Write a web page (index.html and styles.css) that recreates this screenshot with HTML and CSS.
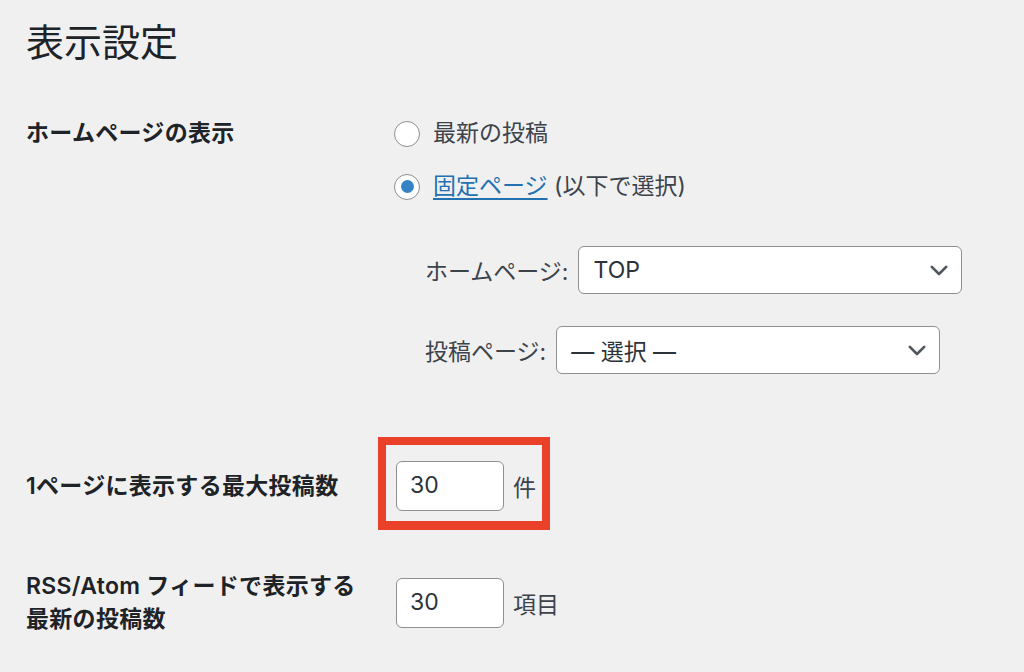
FILE: index.html
```html
<!DOCTYPE html>
<html lang="ja">
<head>
<meta charset="utf-8">
<title>表示設定</title>
<link rel="stylesheet" href="styles.css">
</head>
<body>
<main class="wrap">
  <h1 class="title">表示設定</h1>
  <div class="form">
    <div class="row row-front">
      <div class="th">ホームページの表示</div>
      <div class="td">
        <div class="radio-line"><span class="radio"></span><span>最新の投稿</span></div>
        <div class="radio-line"><span class="radio checked"></span><span><a class="link" href="#">固定ページ</a> (以下で選択)</span></div>
        <ul class="pages">
          <li class="page-line">
            <span class="page-label">ホームページ:</span>
            <div class="select"><span class="select-value">TOP</span><svg class="chev" width="18" height="11" viewBox="0 0 18 11"><polyline points="1.8,1.8 9,9 16.2,1.8" fill="none" stroke="#50575e" stroke-width="2.6" stroke-linecap="round" stroke-linejoin="round"/></svg></div>
          </li>
          <li class="page-line">
            <span class="page-label">投稿ページ:</span>
            <div class="select"><span class="select-value">— 選択 —</span><svg class="chev" width="18" height="11" viewBox="0 0 18 11"><polyline points="1.8,1.8 9,9 16.2,1.8" fill="none" stroke="#50575e" stroke-width="2.6" stroke-linecap="round" stroke-linejoin="round"/></svg></div>
          </li>
        </ul>
      </div>
    </div>

    <div class="row row-posts">
      <div class="th">1ページに表示する最大投稿数</div>
      <div class="td">
        <div class="field highlight">
          <div class="num-input">30</div><span class="suffix">件</span>
          <span class="mark" aria-hidden="true"></span>
        </div>
      </div>
    </div>

    <div class="row row-rss">
      <div class="th two-line">RSS/Atom フィードで表示する<br>最新の投稿数</div>
      <div class="td">
        <div class="field">
          <div class="num-input">30</div><span class="suffix">項目</span>
        </div>
      </div>
    </div>
  </div>
</main>
</body>
</html>
```

FILE: styles.css
```css
html, body {
  margin: 0;
  padding: 0;
  background: #f0f0f1;
}
body {
  width: 1024px;
  height: 672px;
  overflow: hidden;
  font-family: "Inter", "Noto Sans CJK JP", sans-serif;
  color: #3c434a;
  font-size: 23px;
}
.wrap {
  padding-left: 26px;
}
.title {
  margin: 0;
  padding-top: 17px;
  font-size: 38px;
  line-height: 50px;
  font-weight: 400;
  color: #1d2327;
}
.form {
  margin-top: 40px;
}
.row {
  display: grid;
  grid-template-columns: 368px 1fr;
}
.th {
  font-weight: 600;
  color: #1d2327;
  white-space: nowrap;
  letter-spacing: 0.3px;
}
.row-front .th {
  line-height: 53px;
}
.radio-line {
  display: flex;
  align-items: center;
  height: 53px;
  line-height: 53px;
}
.radio {
  box-sizing: border-box;
  width: 26px;
  height: 26px;
  border: 1.6px solid #8c8f94;
  border-radius: 50%;
  background: #fff;
  margin-right: 13px;
  display: flex;
  align-items: center;
  justify-content: center;
  flex: none;
}
.radio.checked::after {
  content: "";
  width: 13px;
  height: 13px;
  border-radius: 50%;
  background: #3582c4;
}
.link {
  color: #2271b1;
  text-decoration: underline;
  text-underline-offset: 4px;
  text-decoration-thickness: 1.5px;
}
.pages {
  list-style: none;
  margin: 33px 0 0;
  padding: 0 0 0 31px;
}
.page-line {
  display: flex;
  align-items: center;
  height: 48px;
}
.page-line + .page-line {
  margin-top: 32px;
}
.page-label {
  margin-right: 10px;
  white-space: nowrap;
}
.select {
  box-sizing: border-box;
  width: 384px;
  height: 48px;
  border: 1.6px solid #8c8f94;
  border-radius: 6px;
  background: #fff;
  display: flex;
  align-items: center;
  justify-content: space-between;
  padding: 0 13px 0 14px;
  color: #2c3338;
}
.chev {
  display: block;
}
.row-posts {
  margin-top: 87px;
  align-items: center;
}
.row-posts .th {
  line-height: 50px;
}
.row-rss {
  margin-top: 59px;
  align-items: center;
}
.two-line {
  line-height: 33px;
}
.field {
  display: flex;
  align-items: center;
  margin-left: 2px;
}
.highlight {
  position: relative;
  width: fit-content;
}
.num-input {
  box-sizing: border-box;
  width: 108px;
  height: 50px;
  border: 1.6px solid #8c8f94;
  border-radius: 6px;
  background: #fff;
  padding-left: 13px;
  line-height: 47px;
  color: #2c3338;
}
.suffix {
  margin-left: 9px;
}
.mark {
  position: absolute;
  left: -18px;
  top: -24px;
  width: 172px;
  height: 93px;
  box-sizing: border-box;
  border: 8px solid #e9412a;
  border-bottom-width: 9px;
}
```
